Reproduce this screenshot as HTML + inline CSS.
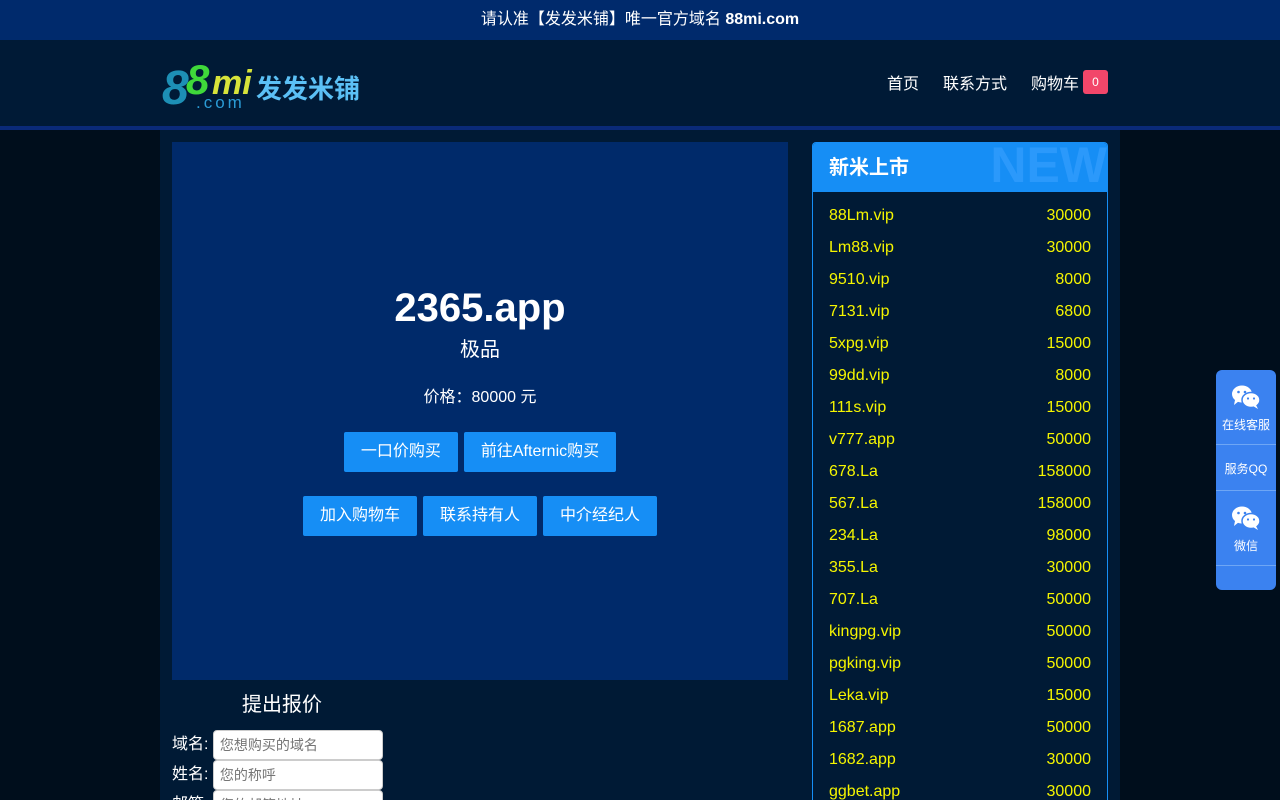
<!DOCTYPE html>
<html><head><meta charset="utf-8"><style>
*{margin:0;padding:0;box-sizing:border-box}
html,body{width:1280px;height:800px;overflow:hidden}
body{background:#000e1c;font-family:"Liberation Sans","Noto Sans CJK SC",sans-serif;color:#fff;position:relative}
.top{height:40px;background:#002a6c;text-align:center;line-height:40px;font-size:16px}
.hdr{height:86px;background:#001a36;position:relative}
.line{height:4px;background:#0a2a78}
.logo{position:absolute;left:162px;top:16px}
.nav{position:absolute;right:172px;top:30px;font-size:16px;display:flex;align-items:center}
.nav span{margin-left:24px}
.badge{background:#f2466a;border-radius:3px;width:25px;height:24px;display:inline-block;text-align:center;line-height:24px;font-size:12px;margin-left:4px;font-style:normal}
.col{position:absolute;left:160px;top:130px;width:960px;height:670px;background:#001a35;overflow:hidden}
.card{position:absolute;left:12px;top:12px;width:616px;height:538px;background:#002a6a;text-align:center}
.card h1{font-size:40px;margin-top:143px;line-height:46px}
.btn{display:inline-block;background:#168ef5;color:#fff;font-size:16px;height:40px;line-height:40px;padding:0 17px;border-radius:2px;margin:0 3px}
.form{position:absolute;left:12px;top:560px;font-size:16px;height:110px;overflow:hidden}
.form input{width:170px;height:30px;border-radius:4px;border:1px solid #ccc;padding-left:6px;font-size:14px;font-family:inherit;vertical-align:middle;background:#fff}
.form div{height:30px;line-height:30px}
.side{position:absolute;left:652px;top:12px;width:296px;height:658px;border:1px solid #168ef5;border-bottom:0;border-radius:4px 4px 0 0;overflow:hidden}
.side .h{height:49px;background:#168ef5;position:relative;font-size:20px;font-weight:bold;line-height:50px;padding-left:16px;overflow:hidden}
.side .h i{position:absolute;right:0;top:-6px;font-style:normal;font-size:50px;font-weight:bold;color:#3ba0ff;opacity:.6;line-height:56px}
.row{display:flex;justify-content:space-between;padding:0 16px;height:32px;line-height:32px;color:#f5f500;font-size:16px}
.list{padding-top:8px}
.float{position:absolute;left:1216px;top:370px;width:60px;height:220px;background:#3b82f0;border-radius:6px;font-size:12px;text-align:center}
.float div{border-bottom:1px solid #6ea6f5}
</style></head><body>
<div class="top">请认准【发发米铺】唯一官方域名 <b>88mi.com</b></div>
<div class="hdr">
<div class="logo">
<svg width="200" height="54"><text x="0" y="48" font-size="48" font-weight="bold" font-style="italic" fill="#1d8fb5" font-family="Liberation Sans">8</text><text x="24" y="38" font-size="42" font-weight="bold" font-style="italic" fill="#3fd83a" font-family="Liberation Sans">8</text><text x="50" y="38" font-size="34" font-weight="bold" font-style="italic" fill="#d7e33a" font-family="Liberation Sans">mi</text><text x="34" y="52" font-size="17" fill="#2a9bd5" font-family="Liberation Sans" letter-spacing="3">.com</text><text x="94" y="42" font-size="26" font-weight="bold" fill="#5bc0f5" font-family="Noto Sans CJK SC">发发米铺</text></svg>
</div>
<div class="nav"><span>首页</span><span>联系方式</span><span>购物车</span><i class="badge">0</i></div>
</div>
<div class="line"></div>
<div class="col">
<div class="card">
<h1>2365.app</h1>
<div style="font-size:20px;margin-top:2px">极品</div>
<div style="font-size:16px;margin-top:21px">价格：80000 元</div>
<div style="margin-top:25px"><span class="btn">一口价购买</span><span class="btn">前往Afternic购买</span></div>
<div style="margin-top:24px"><span class="btn">加入购物车</span><span class="btn">联系持有人</span><span class="btn">中介经纪人</span></div>
</div>
<div class="form">
<div style="font-size:20px;padding-left:70px;height:40px;line-height:30px">提出报价</div>
<div>域名: <input placeholder="您想购买的域名"></div>
<div>姓名: <input placeholder="您的称呼"></div>
<div>邮箱: <input placeholder="您的邮箱地址"></div>
</div>
<div class="side">
<div class="h">新米上市<i>NEW</i></div>
<div class="list">
<div class="row"><span>88Lm.vip</span><span>30000</span></div>
<div class="row"><span>Lm88.vip</span><span>30000</span></div>
<div class="row"><span>9510.vip</span><span>8000</span></div>
<div class="row"><span>7131.vip</span><span>6800</span></div>
<div class="row"><span>5xpg.vip</span><span>15000</span></div>
<div class="row"><span>99dd.vip</span><span>8000</span></div>
<div class="row"><span>111s.vip</span><span>15000</span></div>
<div class="row"><span>v777.app</span><span>50000</span></div>
<div class="row"><span>678.La</span><span>158000</span></div>
<div class="row"><span>567.La</span><span>158000</span></div>
<div class="row"><span>234.La</span><span>98000</span></div>
<div class="row"><span>355.La</span><span>30000</span></div>
<div class="row"><span>707.La</span><span>50000</span></div>
<div class="row"><span>kingpg.vip</span><span>50000</span></div>
<div class="row"><span>pgking.vip</span><span>50000</span></div>
<div class="row"><span>Leka.vip</span><span>15000</span></div>
<div class="row"><span>1687.app</span><span>50000</span></div>
<div class="row"><span>1682.app</span><span>30000</span></div>
<div class="row"><span>ggbet.app</span><span>30000</span></div>
</div>
</div>
</div>
<div class="float">
<div style="height:75px;padding-top:14px"><svg width="30" height="26" viewBox="0 0 30 26"><ellipse cx="11" cy="10" rx="10" ry="8.5" fill="#fff"/><path d="M4 16 L3 21 L8 17Z" fill="#fff"/><ellipse cx="20" cy="16" rx="9" ry="7.5" fill="#fff" stroke="#3b82f0" stroke-width="1.5"/><path d="M25 21 L27 25 L22 22Z" fill="#fff"/><circle cx="7.5" cy="8" r="1.3" fill="#3b82f0"/><circle cx="14" cy="8" r="1.3" fill="#3b82f0"/><circle cx="17" cy="14.5" r="1.1" fill="#3b82f0"/><circle cx="23" cy="14.5" r="1.1" fill="#3b82f0"/></svg><br><span style="display:inline-block;margin-top:3px">在线客服</span></div>
<div style="height:46px;line-height:48px">服务QQ</div>
<div style="height:75px;padding-top:14px"><svg width="30" height="26" viewBox="0 0 30 26"><ellipse cx="11" cy="10" rx="10" ry="8.5" fill="#fff"/><path d="M4 16 L3 21 L8 17Z" fill="#fff"/><ellipse cx="20" cy="16" rx="9" ry="7.5" fill="#fff" stroke="#3b82f0" stroke-width="1.5"/><path d="M25 21 L27 25 L22 22Z" fill="#fff"/><circle cx="7.5" cy="8" r="1.3" fill="#3b82f0"/><circle cx="14" cy="8" r="1.3" fill="#3b82f0"/><circle cx="17" cy="14.5" r="1.1" fill="#3b82f0"/><circle cx="23" cy="14.5" r="1.1" fill="#3b82f0"/></svg><br><span style="display:inline-block;margin-top:3px">微信</span></div>
</div>
</body></html>
